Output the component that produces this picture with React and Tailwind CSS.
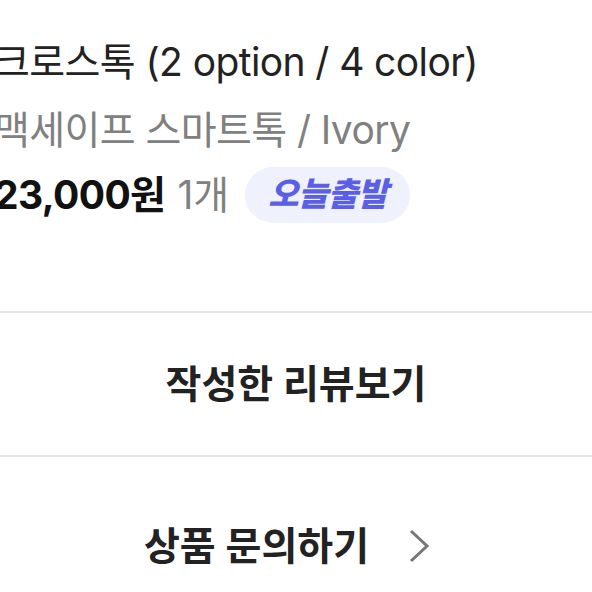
import React from "react";

const font = { fontFamily: '"Inter", "Noto Sans CJK KR", sans-serif' };

const OrderItem = () => {
  return (
    <div className="-ml-[6px] pt-[36px]">
      <p className="text-[39px] leading-[52px] text-[#222] tracking-[-0.6px]">
        크로스톡 (2 option / 4 color)
      </p>
      <p className="mt-[16px] text-[39px] leading-[52px] text-[#808080] tracking-[-0.6px]">
        맥세이프 스마트톡 / Ivory
      </p>
      <div className="mt-[11px] flex items-center">
        <span className="text-[39px] leading-[56px] font-bold text-[#111] tracking-[-0.6px]">23,000원</span>
        <span className="ml-[12px] text-[39px] leading-[56px] text-[#808080]">1개</span>
        <span className="ml-[16px] h-[56px] px-[23px] rounded-full bg-[#eff1fd] flex items-center text-[33px] font-extrabold italic text-[#5a5fe6] tracking-[-0.6px]">
          오늘출발
        </span>
      </div>
    </div>
  );
};

export default function App() {
  return (
    <div className="w-[592px] h-[592px] overflow-hidden bg-white" style={font}>
      <OrderItem />
      <div className="mt-[88px] h-[2px] bg-[#e3e3e3]" />
      <button className="w-full h-[142px] flex items-center justify-center text-[39px] font-semibold text-[#222]">
        작성한 리뷰보기
      </button>
      <div className="h-[2px] bg-[#e3e3e3]" />
      <div className="w-full pt-[61px] flex items-center justify-center gap-[40px] text-[39px] font-semibold text-[#222] pr-[19px]">
        <span className="leading-[56px]">상품 문의하기</span>
        <svg width="20" height="34" viewBox="0 0 20 34" fill="none">
          <path d="M2 2 L18 17 L2 32" stroke="#777" strokeWidth="3" />
        </svg>
      </div>
    </div>
  );
}
